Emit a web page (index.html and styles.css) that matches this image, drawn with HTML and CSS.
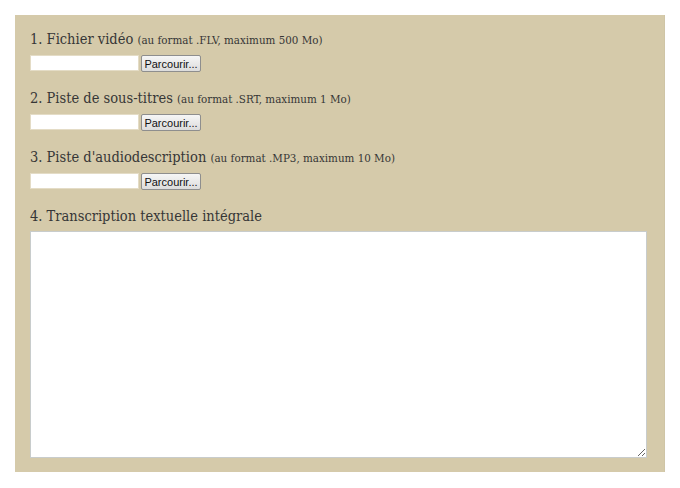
FILE: index.html
```html
<!DOCTYPE html>
<html lang="fr">
<head>
    <meta charset="UTF-8">
    <title>Envoi de vidéo</title>
    <link rel="stylesheet" href="styles.css">
</head>
<body>
<form class="panneau">
    <div class="champ">
        <label class="titre" for="fichier-video">1. Fichier vidéo <small>(au format .FLV, maximum 500 Mo)</small></label>
        <div class="fichier">
            <input type="text" id="fichier-video">
            <button type="button">Parcourir...</button>
        </div>
    </div>
    <div class="champ">
        <label class="titre" for="fichier-srt">2. Piste de sous-titres <small>(au format .SRT, maximum 1 Mo)</small></label>
        <div class="fichier">
            <input type="text" id="fichier-srt">
            <button type="button">Parcourir...</button>
        </div>
    </div>
    <div class="champ">
        <label class="titre" for="fichier-mp3">3. Piste d'audiodescription <small>(au format .MP3, maximum 10 Mo)</small></label>
        <div class="fichier">
            <input type="text" id="fichier-mp3">
            <button type="button">Parcourir...</button>
        </div>
    </div>
    <div class="champ dernier">
        <label class="titre" for="transcription">4. Transcription textuelle intégrale</label>
        <textarea id="transcription"></textarea>
    </div>
</form>
</body>
</html>
```
FILE: styles.css
```css
body {
    margin: 0;
    background: #fff;
    font-family: 'DejaVu Serif', serif;
}
.panneau {
    margin: 15px;
    width: 617px;
    padding: 14px 17px 14px 15px;
    background-color: #D5CAAA;
    border-right: 1px solid #CFC5A6;
}
.champ {
    margin-bottom: 17px;
}
.champ.dernier {
    margin-bottom: 0;
}
.titre {
    display: block;
    height: 20px;
    line-height: 20px;
    font-size: 14.5px;
    font-stretch: condensed;
    color: #363636;
    margin-bottom: 6px;
}
.dernier .titre {
    margin-bottom: 5px;
}
.titre small {
    font-size: 11.5px;
}
.fichier {
    display: flex;
    gap: 2px;
    height: 16px;
}
.fichier input {
    box-sizing: border-box;
    width: 109px;
    height: 16px;
    margin: 0;
    padding: 0 2px;
    border: 1px solid #E4DCC6;
    background: #fff;
}
.fichier button {
    box-sizing: border-box;
    width: 60px;
    height: 17px;
    margin: 0;
    padding: 0;
    font-family: 'Liberation Sans', sans-serif;
    font-size: 11px;
    color: #111;
    border: 1px solid #8E8E8E;
    border-radius: 2px;
    background: linear-gradient(#F6F6F6, #DCDCDC);
}
textarea {
    display: block;
    box-sizing: border-box;
    width: 617px;
    height: 227px;
    margin: 0;
    border: 1px solid #C8CCCC;
    background: #fff;
    resize: vertical;
}
```
